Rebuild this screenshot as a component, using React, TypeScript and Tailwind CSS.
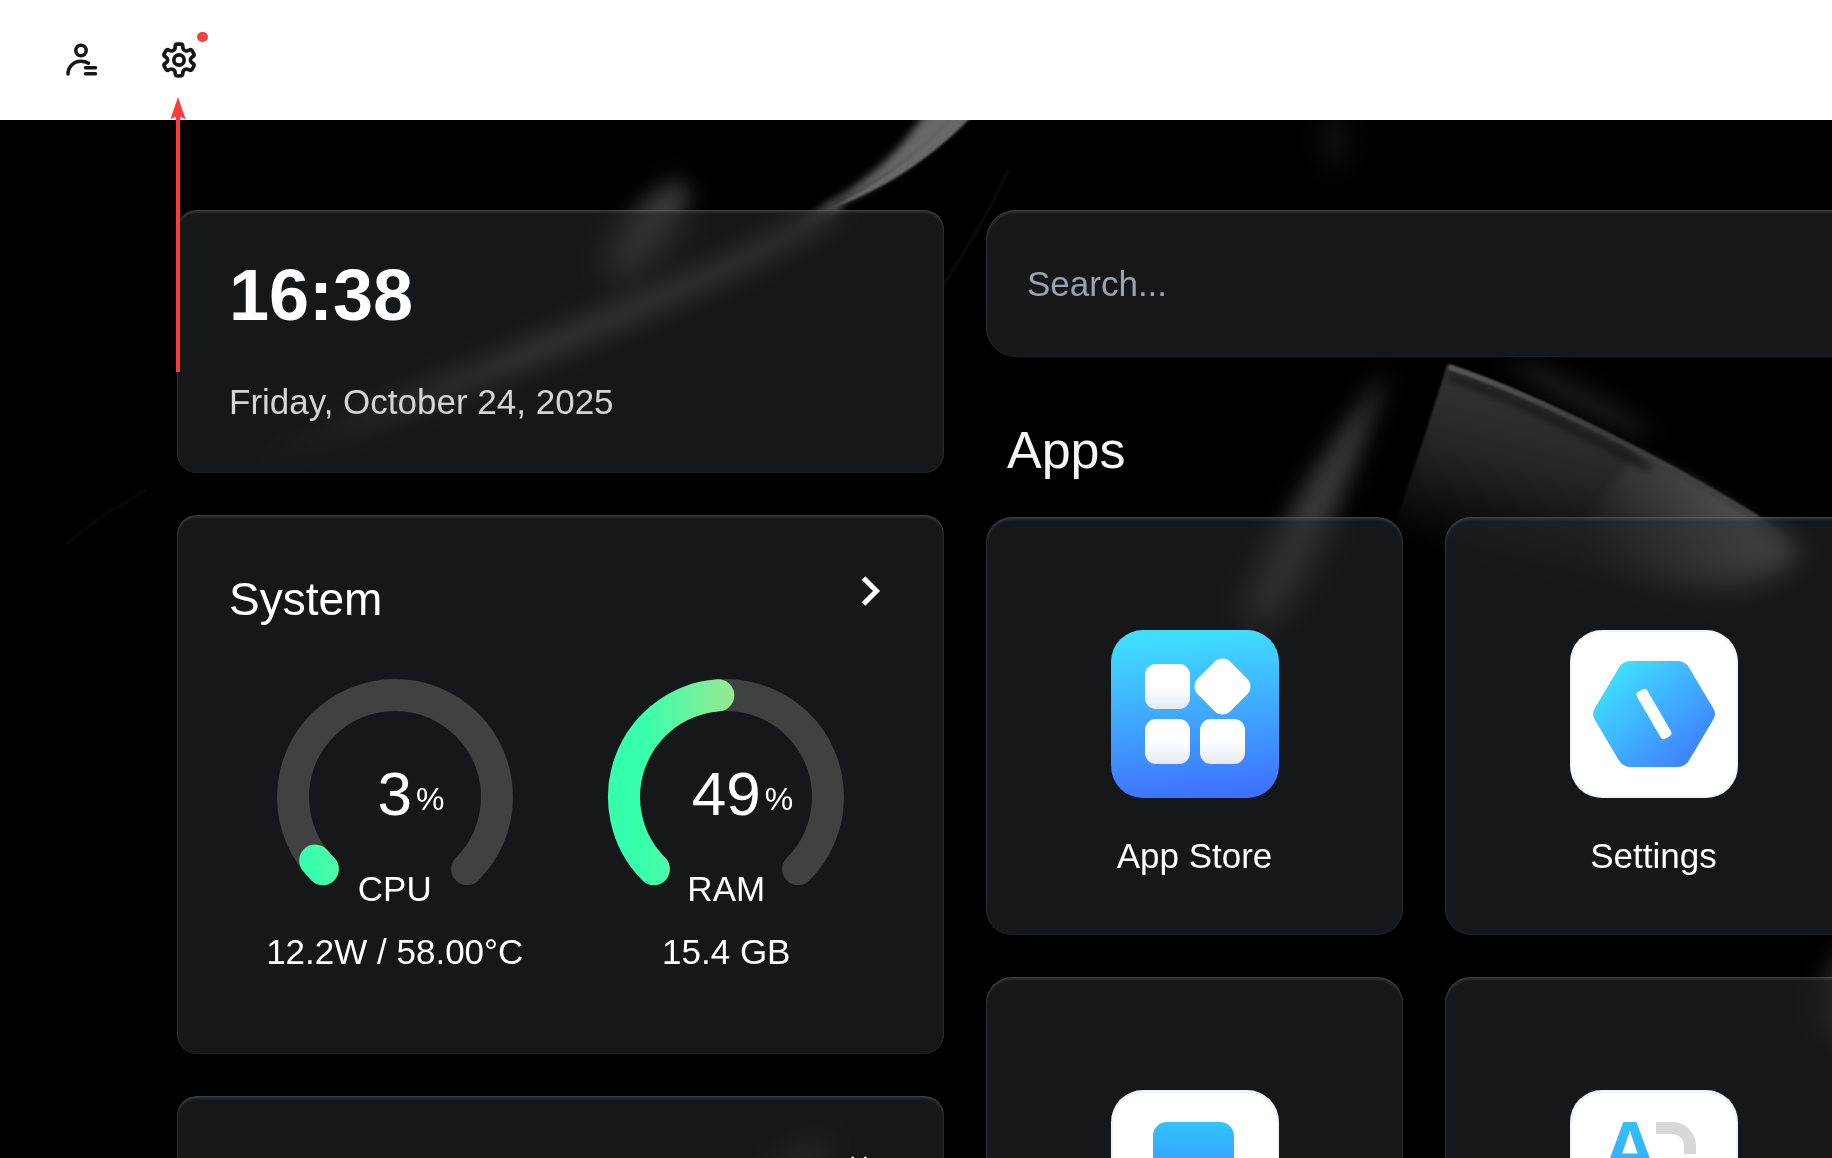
import React from "react";

function Wallpaper() {
  return (
    <svg
      aria-hidden="true"
      className="absolute inset-0 h-full w-full"
      viewBox="0 0 1832 1038"
      preserveAspectRatio="xMinYMin slice"
    >
      <defs>
        <filter id="soft1" colorInterpolationFilters="sRGB" filterUnits="userSpaceOnUse" x="-100" y="-100" width="2100" height="1300">
          <feGaussianBlur stdDeviation="1" />
        </filter>
        <filter id="soft4" colorInterpolationFilters="sRGB" filterUnits="userSpaceOnUse" x="-100" y="-100" width="2100" height="1300">
          <feGaussianBlur stdDeviation="4" />
        </filter>
        <filter id="soft12" colorInterpolationFilters="sRGB" filterUnits="userSpaceOnUse" x="-100" y="-100" width="2100" height="1300">
          <feGaussianBlur stdDeviation="11" />
        </filter>
        <linearGradient id="sweep" gradientUnits="userSpaceOnUse" x1="960" y1="0" x2="230" y2="360">
          <stop offset="0" stopColor="#6a6a6a" />
          <stop offset="0.3" stopColor="#5c5c5c" />
          <stop offset="0.6" stopColor="#4c4c4c" />
          <stop offset="1" stopColor="#000" />
        </linearGradient>
        <linearGradient id="fan" gradientUnits="userSpaceOnUse" x1="1560" y1="290" x2="1520" y2="450">
          <stop offset="0" stopColor="#323232" />
          <stop offset="0.4" stopColor="#242424" />
          <stop offset="1" stopColor="#000" />
        </linearGradient>
        <linearGradient id="tip" gradientUnits="userSpaceOnUse" x1="1790" y1="400" x2="1590" y2="440">
          <stop offset="0" stopColor="#585858" />
          <stop offset="1" stopColor="#585858" stopOpacity="0" />
        </linearGradient>
        <linearGradient id="rim" gradientUnits="userSpaceOnUse" x1="1447" y1="244" x2="1760" y2="396">
          <stop offset="0" stopColor="#5a5a5a" />
          <stop offset="0.5" stopColor="#3c3c3c" />
          <stop offset="1" stopColor="#444" />
        </linearGradient>
      </defs>

      <path
        d="M830 90C760 125 690 158 638 178C590 200 540 218 510 232C420 265 330 300 235 352C320 325 420 290 515 250C600 215 740 150 830 90Z"
        fill="url(#sweep)"
        filter="url(#soft4)"
      />
      <path
        d="M938 -30C912 20 878 56 812 94C864 78 922 40 972 -10L990 -30Z"
        fill="#686868"
        filter="url(#soft4)"
      />
      <path d="M958 -8C922 32 880 64 822 92C884 70 930 40 974 -6Z" fill="#686868" filter="url(#soft1)" />
      <path d="M840 86C760 140 640 190 510 240" fill="none" stroke="#474747" strokeWidth="14" filter="url(#soft4)" />
      <ellipse cx="648" cy="110" rx="22" ry="60" transform="rotate(38 648 110)" fill="#3a3a3a" filter="url(#soft12)" />
      <path d="M1008 50C990 90 970 125 940 170" fill="none" stroke="#111" strokeWidth="2" filter="url(#soft1)" />
      <path d="M147 370C115 388 90 402 66 425" fill="none" stroke="#0e0e0e" strokeWidth="2" filter="url(#soft1)" />

      <path d="M1388 250C1350 300 1300 350 1240 500L1275 500C1330 420 1360 340 1388 250Z" fill="#383838" filter="url(#soft12)" />
      <ellipse cx="1335" cy="20" rx="15" ry="30" fill="#0e0e0e" filter="url(#soft12)" />

      <ellipse cx="1580" cy="278" rx="80" ry="12" transform="rotate(28 1580 278)" fill="#1a1a1a" filter="url(#soft12)" />
      <path
        d="M1447 244C1530 270 1660 335 1759 397C1795 420 1802 430 1790 450C1700 540 1500 560 1372 480C1392 410 1428 310 1447 244Z"
        fill="url(#fan)"
        filter="url(#soft1)"
      />
      <path
        d="M1640 330C1690 355 1730 379 1757 399C1800 424 1810 434 1780 448C1720 475 1640 470 1560 430Z"
        fill="url(#tip)"
        filter="url(#soft4)"
      />
      <path d="M1448 256C1520 280 1590 316 1650 348" fill="none" stroke="#161616" strokeWidth="7" filter="url(#soft4)" />
      <path d="M1449 247C1530 273 1660 338 1757 398" fill="none" stroke="url(#rim)" strokeWidth="5" filter="url(#soft1)" />
      <ellipse cx="1850" cy="880" rx="28" ry="50" fill="#2a2a2a" filter="url(#soft12)" />
      <ellipse cx="790" cy="1045" rx="50" ry="14" transform="rotate(-30 790 1045)" fill="#222" filter="url(#soft12)" />
    </svg>
  );
}

const glass =
  "bg-[#2a2d30]/50 backdrop-blur-md shadow-[inset_0_2px_3px_rgba(255,255,255,0.16),inset_0_0_2px_rgba(255,255,255,0.12)]";

function Header() {
  return (
    <header className="relative z-20 flex h-[120px] shrink-0 items-center gap-[58px] bg-white pl-[61px] text-[#161616]">
      <button type="button" aria-label="Account" className="size-10">
        <svg viewBox="0 0 40 40" fill="none" stroke="currentColor" strokeWidth="3.5" strokeLinecap="round" className="size-10">
          <circle cx="20" cy="10.5" r="5.2" />
          <path d="M7 34C7 27 12.5 21.3 20 21.3C23 21.3 25.5 22 27.5 23.2" />
          <path d="M24.5 27.8H34.5M24.5 33.8H34.5" />
        </svg>
      </button>
      <button type="button" aria-label="Settings" className="relative size-10">
        <svg viewBox="0 0 24 24" fill="none" stroke="currentColor" strokeWidth="2.2" strokeLinecap="round" strokeLinejoin="round" className="size-10">
          <path d="M10.9 2.5H13.1Q14.1 2.5 14.2 3.5L14.4 5.1Q14.5 5.7 15.1 6L15.8 6.4Q16.4 6.7 17 6.5L18.4 5.9Q19.3 5.6 19.8 6.4L20.9 8.3Q21.3 9.2 20.6 9.8L19.4 10.7Q18.9 11.1 18.9 11.6V12.4Q18.9 12.9 19.4 13.3L20.6 14.2Q21.3 14.8 20.9 15.7L19.8 17.6Q19.3 18.4 18.4 18.1L17 17.5Q16.4 17.3 15.8 17.6L15.1 18Q14.5 18.3 14.4 18.9L14.2 20.5Q14.1 21.5 13.1 21.5H10.9Q9.9 21.5 9.8 20.5L9.6 18.9Q9.5 18.3 8.9 18L8.2 17.6Q7.6 17.3 7 17.5L5.6 18.1Q4.7 18.4 4.2 17.6L3.1 15.7Q2.7 14.8 3.4 14.2L4.6 13.3Q5.1 12.9 5.1 12.4V11.6Q5.1 11.1 4.6 10.7L3.4 9.8Q2.7 9.2 3.1 8.3L4.2 6.4Q4.7 5.6 5.6 5.9L7 6.5Q7.6 6.7 8.2 6.4L8.9 6Q9.5 5.7 9.6 5.1L9.8 3.5Q9.9 2.5 10.9 2.5Z" />
          <circle cx="12" cy="12" r="3.1" />
        </svg>
        <span className="absolute -top-2 left-[38px] h-[10px] w-[11px] rounded-full bg-[#ef4444]" />
        <svg aria-hidden="true" viewBox="0 0 16 276" className="pointer-events-none absolute left-[11px] top-14 h-[276px] w-4">
          <path d="M8 1L15.7 23.5C13 21.5 10.5 21 10 21V276H6V21C5.5 21 3 21.5 0.3 23.5Z" fill="#ff3b3b" />
        </svg>
      </button>
    </header>
  );
}

function ClockCard() {
  return (
    <section className={`${glass} h-[263px] rounded-[20px] px-[52px] pt-[48px]`}>
      <time className="block text-[72px] font-bold leading-[74px] text-white">16:38</time>
      <p className="mt-[47px] text-[35px] leading-[46px] text-[#d4d4d4]">Friday, October 24, 2025</p>
    </section>
  );
}

function polar(deg: number) {
  const rad = (deg * Math.PI) / 180;
  return `${118 + 102 * Math.cos(rad)} ${118 + 102 * Math.sin(rad)}`;
}

function arc(fraction: number) {
  const sweep = 270 * fraction;
  return `M${polar(135)}A102 102 0 ${sweep > 180 ? 1 : 0} 1 ${polar(135 + sweep)}`;
}

function Gauge({ id, value, label, detail }: { id: string; value: number; label: string; detail: string }) {
  return (
    <div className="flex flex-col items-center text-[35px] leading-[46px] text-white">
      <div className="relative flex h-[202px] w-[236px] items-center justify-center">
        <svg
          aria-hidden="true"
          viewBox="0 0 236 202"
          fill="none"
          strokeLinecap="round"
          className="absolute inset-0 overflow-visible"
        >
          <defs>
            <linearGradient id={id} gradientUnits="userSpaceOnUse" x1="16" y1="0" x2="236" y2="0">
              <stop offset="0" stopColor="#34ffac" />
              <stop offset="0.1" stopColor="#3affac" />
              <stop offset="0.5" stopColor="#9be890" />
              <stop offset="1" stopColor="#f0d070" />
            </linearGradient>
          </defs>
          <path d={arc(1)} stroke="#404241" strokeWidth="32" />
          <path d={arc((value - 0.6) / 100)} stroke={`url(#${id})`} strokeWidth="32" />
        </svg>
        <div className="relative mt-[28px] text-[62px] leading-[60px]">
          {value}
          <span className="absolute bottom-0 left-full pl-1 text-[32px] leading-[50px]">%</span>
        </div>
      </div>
      <div className="-mt-[15px]">{label}</div>
      <div className="mt-[17px] whitespace-nowrap">{detail}</div>
    </div>
  );
}

function SystemCard() {
  return (
    <section className={`${glass} h-[539px] shrink-0 rounded-[20px] px-[52px] pt-[56px]`}>
      <div className="flex items-start justify-between">
        <h2 className="text-[46px] leading-[56px] text-white">System</h2>
        <button type="button" aria-label="Open system details" className="mr-[11px] mt-[5px] text-white">
          <svg viewBox="0 0 20 30" fill="none" stroke="currentColor" strokeWidth="5" className="h-[30px] w-5">
            <path d="M2.5 2L15.5 15L2.5 28" />
          </svg>
        </button>
      </div>
      <div className="mt-[52px] grid grid-cols-2">
        <Gauge id="cpu" value={3} label="CPU" detail="12.2W / 58.00°C" />
        <Gauge id="ram" value={49} label="RAM" detail="15.4 GB" />
      </div>
    </section>
  );
}

function PagerCard() {
  return (
    <section className={`${glass} h-[539px] shrink-0 rounded-[20px] px-[52px] pt-[60px]`}>
      <div className="mr-[11px] flex justify-end gap-1 text-white">
        <button type="button" aria-label="Previous">
          <svg viewBox="0 0 20 30" fill="none" stroke="currentColor" strokeWidth="5" className="h-[30px] w-5">
            <path d="M17.5 2L4.5 15L17.5 28" />
          </svg>
        </button>
        <button type="button" aria-label="Next">
          <svg viewBox="0 0 20 30" fill="none" stroke="currentColor" strokeWidth="5" className="h-[30px] w-5">
            <path d="M2.5 2L15.5 15L2.5 28" />
          </svg>
        </button>
      </div>
    </section>
  );
}

function AppStoreIcon() {
  return (
    <svg aria-hidden="true" viewBox="0 0 168 168" className="size-[168px]">
      <defs>
        <linearGradient id="storeBg" x1="0.45" y1="0" x2="0.55" y2="1">
          <stop offset="0.02" stopColor="#40deff" />
          <stop offset="1" stopColor="#3f70ff" />
        </linearGradient>
        <linearGradient id="tile" x1="0" y1="0" x2="0" y2="1">
          <stop offset="0.5" stopColor="#fff" />
          <stop offset="1" stopColor="#e5eaf0" />
        </linearGradient>
      </defs>
      <rect width="168" height="168" rx="32" fill="url(#storeBg)" />
      <rect x="34" y="34" width="45" height="45" rx="11" fill="url(#tile)" />
      <rect x="34" y="89" width="45" height="45" rx="11" fill="url(#tile)" />
      <rect x="89" y="89" width="45" height="45" rx="11" fill="url(#tile)" />
      <rect x="88.5" y="33.5" width="46" height="46" rx="11" transform="rotate(45 111.5 56.5)" fill="#fff" />
    </svg>
  );
}

function SettingsIcon() {
  return (
    <svg aria-hidden="true" viewBox="0 0 168 168" className="size-[168px]">
      <defs>
        <linearGradient id="hex" x1="0.1" y1="0.1" x2="0.9" y2="0.85">
          <stop offset="0.05" stopColor="#40deff" />
          <stop offset="1" stopColor="#3f80ff" />
        </linearGradient>
      </defs>
      <rect width="168" height="168" rx="32" fill="#f4f5f6" />
      <rect x="2" y="2" width="164" height="164" rx="30" fill="#fff" />
      <path
        d="M60 31H108Q115 31 119 37.5L143 78Q147 84 143 90L119 130.5Q115 137 108 137H60Q53 137 49 130.5L25 90Q21 84 25 78L49 37.5Q53 31 60 31Z"
        fill="url(#hex)"
      />
      <rect x="78" y="57" width="12" height="54" rx="3.5" transform="rotate(-30 84 84)" fill="#fff" />
    </svg>
  );
}

function FilesIcon() {
  return (
    <svg aria-hidden="true" viewBox="0 0 168 168" className="size-[168px]">
      <defs>
        <linearGradient id="doc" x1="0" y1="0" x2="0" y2="1">
          <stop offset="0" stopColor="#33c4fc" />
          <stop offset="1" stopColor="#3f70ff" />
        </linearGradient>
      </defs>
      <rect width="168" height="168" rx="32" fill="#f1f2f5" />
      <rect x="2" y="3" width="164" height="163" rx="30" fill="#fff" />
      <rect x="42" y="32" width="81" height="104" rx="14" fill="url(#doc)" />
    </svg>
  );
}

function TranslateIcon() {
  return (
    <svg aria-hidden="true" viewBox="0 0 168 168" className="size-[168px]">
      <defs>
        <linearGradient id="glyph" x1="0" y1="0" x2="0" y2="1">
          <stop offset="0.1" stopColor="#33c4fc" />
          <stop offset="1" stopColor="#33a4fc" />
        </linearGradient>
      </defs>
      <rect width="168" height="168" rx="32" fill="#f1f2f5" />
      <rect x="2" y="3" width="164" height="163" rx="30" fill="#fff" />
      <text x="60" y="86" textAnchor="middle" fontSize="78" fontWeight="700" fill="url(#glyph)">
        A
      </text>
      <path d="M86 38H102A18 18 0 0 1 120 56V64" fill="none" stroke="#d8d8d8" strokeWidth="12" />
    </svg>
  );
}

function AppCard({ name, children }: { name?: string; children: React.ReactNode }) {
  return (
    <a
      href="#"
      aria-label={name ? undefined : "App"}
      className={`${glass} flex h-[418px] flex-col items-center rounded-[26px] pt-[113px] text-[35px] leading-[46px] text-white`}
    >
      {children}
      {name && <span className="mt-[35px]">{name}</span>}
    </a>
  );
}

export default function App() {
  return (
    <div className="flex h-screen flex-col overflow-hidden bg-black font-['Liberation_Sans',Arial,sans-serif]">
      <Header />
      <main className="relative min-h-0 flex-1 overflow-hidden">
        <Wallpaper />
        <div className="relative flex gap-[42px] pl-[177px] pt-[90px]">
          <div className="flex w-[767px] shrink-0 flex-col gap-[42px]">
            <ClockCard />
            <SystemCard />
            <PagerCard />
          </div>
          <div className="min-w-[876px] flex-1">
            <input
              type="search"
              aria-label="Search"
              placeholder="Search..."
              className={`${glass} block h-[147px] w-full rounded-[30px] px-[41px] text-[35px] text-white placeholder:text-[#9ca3af]`}
            />
            <h1 className="mt-[63px] pl-[21px] text-[52px] leading-[60px] text-[#f5f5f5]">Apps</h1>
            <div className="mt-[37px] grid grid-cols-2 gap-[42px]">
              <AppCard name="App Store">
                <AppStoreIcon />
              </AppCard>
              <AppCard name="Settings">
                <SettingsIcon />
              </AppCard>
              <AppCard>
                <FilesIcon />
              </AppCard>
              <AppCard>
                <TranslateIcon />
              </AppCard>
            </div>
          </div>
        </div>
      </main>
    </div>
  );
}
